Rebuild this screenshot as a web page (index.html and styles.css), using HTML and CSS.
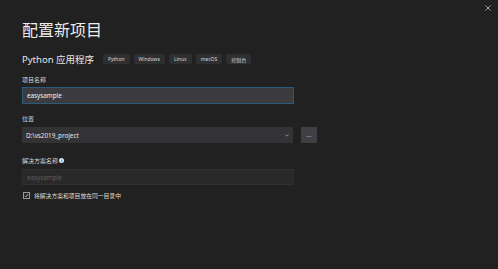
FILE: index.html
```html
<!DOCTYPE html>
<html lang="zh-CN">
<head>
    <meta charset="UTF-8">
    <title>配置新项目</title>
    <link rel="stylesheet" href="styles.css">
</head>
<body>
    <div class="dialog">
        <span class="close-btn">
            <svg width="6" height="6" viewBox="0 0 6 6"><path d="M0.5 0.5L5.5 5.5M5.5 0.5L0.5 5.5" stroke="#a0a0a0" stroke-width="1"/></svg>
        </span>
        <h1 class="title">配置新项目</h1>
        <div class="template-row">
            <span class="template-name">Python 应用程序</span>
            <span class="chip">Python</span>
            <span class="chip">Windows</span>
            <span class="chip">Linux</span>
            <span class="chip">macOS</span>
            <span class="chip">控制台</span>
        </div>

        <!-- 项目名称 -->
        <label class="field-label first">项目名称</label>
        <div class="text-box active">easysample</div>

        <!-- 位置 -->
        <label class="field-label">位置</label>
        <div class="location-row">
            <div class="select-box">
                <span>D:\vs2019_project</span>
                <svg width="4" height="3" viewBox="0 0 4 3"><path d="M0.5 0.5L2 2.2L3.5 0.5" stroke="#9a9a9a" fill="none" stroke-width="0.8"/></svg>
            </div>
            <div class="browse-btn">...</div>
        </div>

        <!-- 解决方案名称 -->
        <label class="field-label">解决方案名称 <span class="info">i</span></label>
        <div class="text-box disabled">easysample</div>

        <div class="check-row">
            <span class="checkbox">
                <svg width="6" height="6" viewBox="0 0 6 6"><path d="M1 3.2L2.4 4.6L5 1.2" stroke="#e8e8e8" fill="none" stroke-width="0.9"/></svg>
            </span>
            <span>将解决方案和项目放在同一目录中</span>
        </div>
    </div>
</body>
</html>
```

FILE: styles.css
```css
body {
    margin: 0;
    padding: 0;
    background-color: #212121;
    font-family: "Noto Sans", "Noto Sans CJK SC", sans-serif;
    color: #e2e2e2;
}
.dialog {
    position: relative;
    width: 498px;
    height: 269px;
    box-sizing: border-box;
    padding: 20px 0 0 22px;
}
.close-btn {
    position: absolute;
    top: 5px;
    right: 7px;
    line-height: 0;
}
.title {
    margin: 0;
    font-size: 16px;
    line-height: 20px;
    font-weight: normal;
    color: #ececec;
}
.template-row {
    display: flex;
    align-items: center;
    height: 14px;
    margin-top: 12px;
}
.template-name {
    font-size: 9.5px;
    color: #e6e6e6;
    margin-right: 9px;
}
.chip {
    display: inline-flex;
    align-items: center;
    justify-content: center;
    height: 10px;
    padding: 0 5px;
    margin-right: 4px;
    background: #2f2f31;
    border-radius: 2px;
    font-size: 5px;
    color: #d8d8d8;
}
.field-label {
    display: flex;
    align-items: center;
    height: 10px;
    margin-top: 9px;
    font-size: 6px;
    color: #d6d6d6;
}
.field-label.first {
    margin-top: 8px;
}
.text-box {
    width: 272px;
    height: 17px;
    box-sizing: border-box;
    margin-top: 3px;
    padding-left: 4px;
    display: flex;
    align-items: center;
    font-size: 6.3px;
}
.text-box.active {
    background: #3b3b3f;
    border: 1px solid #2c5a7a;
    color: #f2f2f2;
}
.text-box.disabled {
    height: 16px;
    margin-top: 4px;
    background: #29292a;
    border: 1px solid #303031;
    color: #5c5c5c;
}
.location-row {
    display: flex;
    margin-top: 4px;
}
.select-box {
    width: 271px;
    height: 16px;
    box-sizing: border-box;
    padding: 0 4px 0 4px;
    background: #333336;
    display: flex;
    align-items: center;
    justify-content: space-between;
    font-size: 6.3px;
    color: #e6e6e6;
}
.browse-btn {
    width: 16px;
    height: 16px;
    margin-left: 8px;
    background: #3f3f44;
    display: flex;
    align-items: center;
    justify-content: center;
    font-size: 6px;
    color: #dcdcdc;
}
.info {
    display: inline-flex;
    align-items: center;
    justify-content: center;
    width: 5px;
    height: 5px;
    margin-left: 1px;
    border-radius: 50%;
    background: #d6e8f8;
    color: #2a5d8a;
    font-size: 4px;
    font-weight: bold;
}
.field-label:has(.info) {
    margin-top: 12px;
}
.check-row {
    display: flex;
    align-items: center;
    height: 10px;
    margin-top: 5px;
    padding-left: 1px;
    font-size: 5.8px;
    color: #dedede;
}
.checkbox {
    width: 7px;
    height: 7px;
    box-sizing: border-box;
    border: 1px solid #9a9a9a;
    margin-right: 4px;
    display: inline-flex;
    align-items: center;
    justify-content: center;
}
.checkbox svg {
    width: 5px;
    height: 5px;
}
```
